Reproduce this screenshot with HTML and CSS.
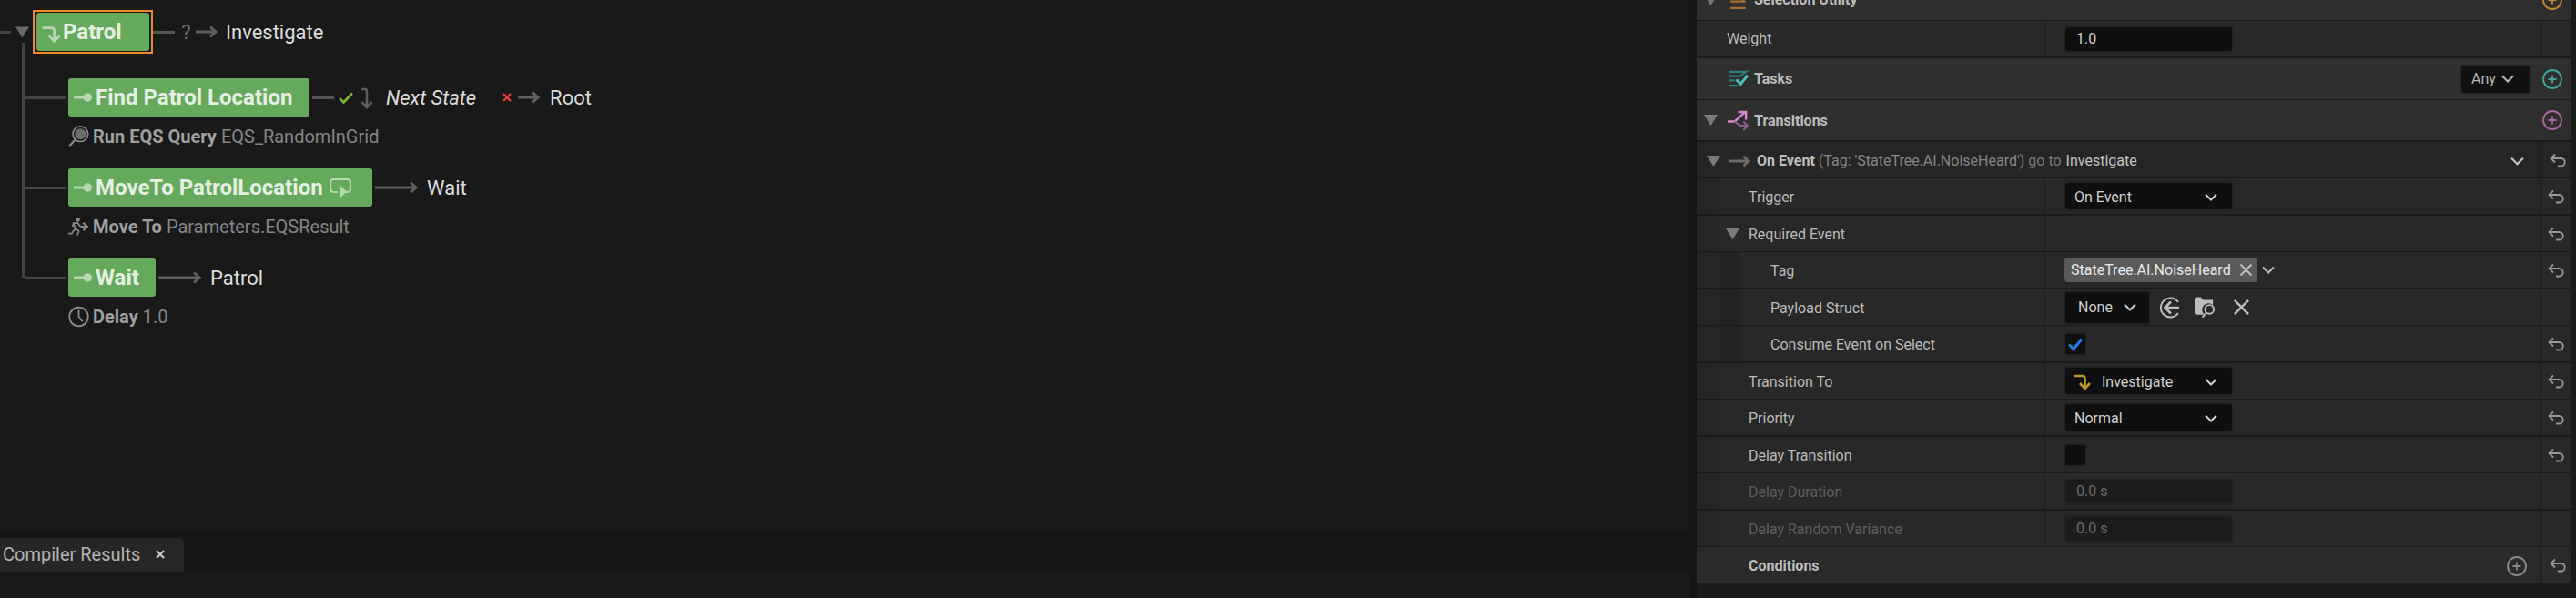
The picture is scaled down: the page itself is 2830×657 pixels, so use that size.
FILE: index.html
```html
<!DOCTYPE html>
<html lang="en">
<head>
<meta charset="utf-8">
<title>State Tree</title>
<link rel="stylesheet" href="styles.css">
</head>
<body>
<svg class="defs" width="0" height="0" aria-hidden="true">
  <symbol id="reset" viewBox="0 0 18 16"><path d="M6 1.500 1.500 6 6 10.500M1.500 6H12.500a4 4 0 0 1 0 8.500H9" fill="none" stroke="currentColor" stroke-width="1.800"/></symbol>
  <symbol id="chev" viewBox="0 0 14 9"><path d="M1 1.500 7 7.500 13 1.500" fill="none" stroke="currentColor" stroke-width="2"/></symbol>
  <symbol id="tri" viewBox="0 0 15 12"><path d="M0 0H15L7.500 12Z" fill="currentColor"/></symbol>
  <symbol id="plus" viewBox="0 0 22 22"><circle cx="11" cy="11" r="10" fill="none" stroke="currentColor" stroke-width="1.800"/><path d="M11 6.500V15.500M6.500 11H15.500" stroke="currentColor" stroke-width="1.800"/></symbol>
  <symbol id="arrow" viewBox="0 0 24 14"><path d="M0 7H22M16 1.500 22 7 16 12.500" fill="none" stroke="currentColor" stroke-width="3"/></symbol>
  <symbol id="longarrow" viewBox="0 0 47 14"><path d="M0 7H45M39 1.500 45 7 39 12.500" fill="none" stroke="currentColor" stroke-width="3"/></symbol>
  <symbol id="pin" viewBox="0 0 22 12"><path d="M0 6H14" stroke="currentColor" stroke-width="3"/><circle cx="16" cy="6" r="5" fill="currentColor"/></symbol>
  <symbol id="cross" viewBox="0 0 20 20"><path d="M2 2 18 18M18 2 2 18" fill="none" stroke="currentColor" stroke-width="2.600"/></symbol>
</svg>

<div class="app">
  <main class="left">
    <section class="graph">
      <div class="state root">
        <span class="dash"></span>
        <svg class="tri-root"><use href="#tri"/></svg>
        <div class="outline">
          <div class="node node-patrol">
            <svg class="ico-enter" viewBox="0 0 21 22"><path d="M0 3H11Q14.500 3 14.500 7V18M8 12.500 14.500 19 21 12.500" fill="none" stroke="currentColor" stroke-width="3"/></svg>
            <span class="title">Patrol</span>
          </div>
        </div>
        <span class="line"></span>
        <span class="qm">?</span>
        <svg class="arrow"><use href="#arrow"/></svg>
        <span class="target target-i">Investigate</span>
      </div>

      <div class="tree">
        <div class="rail"></div>
        <div class="kids">
          <div class="kid">
            <div class="state">
              <span class="conn"></span>
              <div class="node node-find">
                <svg class="pin"><use href="#pin"/></svg>
                <span class="title">Find Patrol Location</span>
              </div>
              <span class="line line-find"></span>
              <svg class="check" viewBox="0 0 16 13"><path d="M1 7 5.500 11.500 15 1.500" fill="none" stroke="#7ab53a" stroke-width="2.600"/></svg>
              <svg class="down" viewBox="0 0 14 24"><path d="M1 2H5Q7 2 7 5V22M1.500 16 7 22 12.500 16" fill="none" stroke="currentColor" stroke-width="2.600"/></svg>
              <span class="target target-next">Next State</span>
              <svg class="fail" viewBox="0 0 10 10"><path d="M1 1 9 9M9 1 1 9" stroke="#f03a3a" stroke-width="2.400"/></svg>
              <svg class="arrow"><use href="#arrow"/></svg>
              <span class="target target-a">Root</span>
            </div>
            <div class="sub">
              <svg class="sub-ico" viewBox="0 0 24 26"><circle cx="14" cy="10" r="9" fill="none" stroke="currentColor" stroke-width="1.800"/><circle cx="14" cy="10" r="6.500" fill="currentColor" opacity=".75"/><path d="M7.500 17 1 24" stroke="currentColor" stroke-width="2.400"/></svg>
              <b>Run EQS Query</b> <span>EQS_RandomInGrid</span>
            </div>
          </div>

          <div class="kid">
            <div class="state">
              <span class="conn"></span>
              <div class="node node-move">
                <svg class="pin"><use href="#pin"/></svg>
                <span class="title">MoveTo PatrolLocation</span>
                <svg class="ico-loop" viewBox="0 0 24 23"><path d="M9 15H5Q1 15 1 11V5Q1 1 5 1H19Q23 1 23 5V11Q23 15 19 15H16" fill="none" stroke="currentColor" stroke-width="2.200"/><path d="M11 7 19 14.500 11 22Z" fill="currentColor"/></svg>
              </div>
              <svg class="long"><use href="#longarrow"/></svg>
              <span class="target target-wait">Wait</span>
            </div>
            <div class="sub">
              <svg class="sub-ico" viewBox="0 0 24 22"><circle cx="11" cy="3" r="2.400" fill="currentColor"/><path d="M0 19H4L8 13 6 7H11L14 11M8 13 12 16 10.500 21M5 11 6 7" fill="none" stroke="currentColor" stroke-width="1.800"/><path d="M14 11H20M17 6.500 22 11 17 15.500" fill="none" stroke="currentColor" stroke-width="2.200"/></svg>
              <b>Move To</b> <span>Parameters.EQSResult</span>
            </div>
          </div>

          <div class="kid">
            <div class="state">
              <span class="conn"></span>
              <div class="node node-wait">
                <svg class="pin"><use href="#pin"/></svg>
                <span class="title">Wait</span>
              </div>
              <svg class="long"><use href="#longarrow"/></svg>
              <span class="target target-wait">Patrol</span>
            </div>
            <div class="sub">
              <svg class="sub-ico" viewBox="0 0 22 22"><circle cx="11" cy="11" r="9.800" fill="none" stroke="currentColor" stroke-width="1.800"/><path d="M11 4V11L15 16" fill="none" stroke="currentColor" stroke-width="1.800"/></svg>
              <b>Delay</b> <span>1.0</span>
            </div>
          </div>
        </div>
      </div>
    </section>
    <nav class="tabbar">
      <div class="tab">Compiler Results<svg class="tab-x" viewBox="0 0 10 10"><path d="M1 1 9 9M9 1 1 9" stroke="currentColor" stroke-width="2.200"/></svg></div>
    </nav>
    <div class="leftfoot"></div>
  </main>

  <div class="gutter"></div>

  <aside class="details">
    <div class="band band-clip">
      <span class="band-tri"><svg class="tri"><use href="#tri"/></svg></span>
      <svg class="band-ico" viewBox="0 0 22 22"><path d="M3 4H19M3 13H19M3 20H19" stroke="#a8702c" stroke-width="2"/><path d="M16 0V12" stroke="#c98630" stroke-width="2.500"/></svg>
      <span class="band-title">Selection Utility</span>
      <svg class="plus plus-orange"><use href="#plus"/></svg>
    </div>

    <div class="row thick">
      <div class="name l0"><span>Weight</span></div>
      <div class="val"><div class="field"><span>1.0</span></div></div>
      <div class="rst"></div>
    </div>

    <div class="band">
      <span class="band-tri"></span>
      <svg class="band-ico" viewBox="0 0 24 20"><path d="M1 2H21L14 7H1M1 12H8M1 18H12" fill="none" stroke="#2f7d78" stroke-width="2.400"/><path d="M10 11 15 16 23 6" fill="none" stroke="#4fc4bd" stroke-width="3"/></svg>
      <span class="band-title">Tasks</span>
      <div class="any"><span>Any</span><svg class="chev"><use href="#chev"/></svg></div>
      <svg class="plus plus-teal"><use href="#plus"/></svg>
    </div>

    <div class="band band-end">
      <span class="band-tri"><svg class="tri"><use href="#tri"/></svg></span>
      <svg class="band-ico" viewBox="0 0 24 24"><path d="M0 13H8L19 3M12 2H21V11" fill="none" stroke="#d58ad0" stroke-width="2.600"/><path d="M8 13 15 18H23M18 13 23 18 18 23" fill="none" stroke="#8a5c88" stroke-width="2.400"/></svg>
      <span class="band-title">Transitions</span>
      <svg class="plus plus-purple"><use href="#plus"/></svg>
    </div>

    <div class="row head">
      <div class="summary">
        <svg class="tri tri-event"><use href="#tri"/></svg>
        <svg class="arrow-event"><use href="#arrow"/></svg>
        <b>On Event</b><span class="dim">(Tag: 'StateTree.AI.NoiseHeard')</span><span class="dim2">go to</span><span class="lit">Investigate</span>
        <svg class="chev chev-event"><use href="#chev"/></svg>
      </div>
      <div class="rst rst-wide"><svg class="reset"><use href="#reset"/></svg></div>
    </div>

    <div class="row thick">
      <div class="name l1"><span>Trigger</span></div>
      <div class="val"><div class="field combo"><span>On Event</span><svg class="chev"><use href="#chev"/></svg></div></div>
      <div class="rst"><svg class="reset"><use href="#reset"/></svg></div>
    </div>
    <div class="row">
      <div class="name l1 has-tri"><svg class="tri tri-req"><use href="#tri"/></svg><span>Required Event</span></div>
      <div class="val"></div>
      <div class="rst"><svg class="reset"><use href="#reset"/></svg></div>
    </div>
    <div class="row thick">
      <div class="name l2"><span>Tag</span></div>
      <div class="val">
        <div class="chip"><span>StateTree.AI.NoiseHeard</span><svg class="chip-x"><use href="#cross"/></svg></div>
        <svg class="chev chev-tag"><use href="#chev"/></svg>
      </div>
      <div class="rst"><svg class="reset"><use href="#reset"/></svg></div>
    </div>
    <div class="row">
      <div class="name l2"><span>Payload Struct</span></div>
      <div class="val">
        <div class="field none"><span>None</span><svg class="chev"><use href="#chev"/></svg></div>
        <svg class="act-back" viewBox="0 0 23 24"><path d="M21 6A10.500 10.500 0 1 0 21 18" fill="none" stroke="currentColor" stroke-width="2"/><path d="M22 12H7M13 5.500 6.500 12 13 18.500" fill="none" stroke="currentColor" stroke-width="2.600"/></svg>
        <svg class="act-folder" viewBox="0 0 24 24"><path d="M0 2Q0 0 2 0H7L10 3H21V9A7 7 0 0 0 11 20H2Q0 20 0 18Z" fill="currentColor"/><circle cx="17" cy="14" r="5" fill="none" stroke="currentColor" stroke-width="2"/><path d="M13 18 9 23" stroke="currentColor" stroke-width="2"/></svg>
        <svg class="act-x"><use href="#cross"/></svg>
      </div>
      <div class="rst"></div>
    </div>
    <div class="row thick">
      <div class="name l2"><span>Consume Event on Select</span></div>
      <div class="val"><div class="box"><svg class="tick" viewBox="0 0 16 14"><path d="M1 7.500 6 12.500 15 1.500" fill="none" stroke="#1a7fe8" stroke-width="3"/></svg></div></div>
      <div class="rst"><svg class="reset"><use href="#reset"/></svg></div>
    </div>
    <div class="row">
      <div class="name l1"><span>Transition To</span></div>
      <div class="val"><div class="field combo"><svg class="goto" viewBox="0 0 20 17"><path d="M0 2H9Q11.500 2 11.500 5V8" fill="none" stroke="#b89c1e" stroke-width="2.600"/><path d="M11.500 7V14M6 10 11.500 16 17 10" fill="none" stroke="#b89c1e" stroke-width="2.600"/></svg><span class="goto-label">Investigate</span><svg class="chev"><use href="#chev"/></svg></div></div>
      <div class="rst"><svg class="reset"><use href="#reset"/></svg></div>
    </div>
    <div class="row thick">
      <div class="name l1"><span>Priority</span></div>
      <div class="val"><div class="field combo"><span>Normal</span><svg class="chev"><use href="#chev"/></svg></div></div>
      <div class="rst"><svg class="reset"><use href="#reset"/></svg></div>
    </div>
    <div class="row">
      <div class="name l1"><span>Delay Transition</span></div>
      <div class="val"><div class="box"></div></div>
      <div class="rst"><svg class="reset"><use href="#reset"/></svg></div>
    </div>
    <div class="row thick off">
      <div class="name l1"><span>Delay Duration</span></div>
      <div class="val"><div class="field"><span>0.0 s</span></div></div>
      <div class="rst"></div>
    </div>
    <div class="row off">
      <div class="name l1"><span>Delay Random Variance</span></div>
      <div class="val"><div class="field"><span>0.0 s</span></div></div>
      <div class="rst"></div>
    </div>
    <div class="row head last">
      <div class="summary cond">
        <b>Conditions</b>
        <svg class="plus plus-grey"><use href="#plus"/></svg>
      </div>
      <div class="rst rst-wide"><svg class="reset"><use href="#reset"/></svg></div>
    </div>
  </aside>
</div>
</body>
</html>
```

FILE: styles.css
```css
* { box-sizing: border-box; }
html, body { margin: 0; height: 100%; background: #1a1a1a; overflow: hidden; }
body { font-family: Roboto, "Liberation Sans", sans-serif; color: #c0c0c0; }
.defs { position: absolute; }
svg { display: block; flex: none; }

.app { display: flex; width: 2830px; height: 657px; }

/* ---------- left: state tree ---------- */
.left { width: 1855px; display: flex; flex-direction: column; }
.graph { height: 583px; padding-top: 11px; background: #191919; color: #5c5c5c; }
.tabbar { height: 45px; padding-top: 8px; background: #151515; }
.tab { width: 202px; height: 37px; padding: 0 0 2px 3px; display: flex; align-items: center; background: #262626; border-top-right-radius: 5px; font-size: 20px; color: #b4b4b4; }
.tab-x { width: 10px; height: 10px; margin-left: 17px; color: #c8c8c8; }
.leftfoot { flex: 1; background: #1a1a1a; }
.gutter { width: 9px; background: #151515; border-left: 1px solid #242424; }

.state { display: flex; align-items: center; height: 48px; }
.dash { width: 12px; height: 3px; background: #444; }
.tri-root { width: 15px; height: 13px; margin: 0 4px 0 5px; color: #6a6a6a; }
.outline { padding: 1px 2px; border: 2px solid #ef8a1f; height: 48px; }
.node { display: flex; align-items: center; height: 42px; background: #65aa5c; border-radius: 3px; color: #e6efe4; }
.title { font-size: 24px; font-weight: 700; line-height: 42px; white-space: nowrap; }
.node-patrol { width: 124px; padding-left: 6px; }
.ico-enter { width: 20px; height: 20px; margin-right: 3px; margin-top: 6px; color: #b8d8b2; }
.pin { width: 21px; height: 12px; margin: 0 3px 0 6px; color: #b8d8b2; }
.node-find { width: 265px; }
.node-move { width: 334px; }
.node-wait { width: 96px; }
.ico-loop { width: 24px; height: 23px; margin-left: 7px; margin-top: 3px; color: #b8d8b2; }

.line { width: 24px; height: 3px; background: #555; }
.line-find { margin-left: 3px; }
.qm { width: 11px; margin: 0 5px 0 7px; font-size: 22px; color: #6c6c6c; text-align: center; }
.arrow { width: 24px; height: 14px; color: #5f5f5f; }
.long { width: 47px; height: 14px; margin-left: 3px; color: #5f5f5f; }
.target { font-size: 22px; color: #dcdcdc; white-space: nowrap; }
.target-i { margin-left: 9px; }
.target-a { margin-left: 11px; }
.target-wait { margin-left: 10px; }
.target-next { margin-left: 14px; font-style: italic; }
.check { width: 16px; height: 13px; margin-left: 5px; }
.down { width: 14px; height: 24px; margin-left: 8px; margin-top: 2px; color: #5f5f5f; }
.fail { width: 10px; height: 10px; margin: 0 7px 0 29px; }

.tree { display: flex; margin: -12px 0 0 24px; align-items: flex-start; }
.rail { width: 3px; height: 258px; background: #444; }
.kids { padding-top: 39px; }
.kid { height: 99px; }
.kid .state { height: 42px; }
.conn { width: 45px; height: 3px; margin-right: 3px; background: #444; }
.sub { display: flex; align-items: center; gap: 5px; height: 44px; margin-left: 48px; font-size: 20px; color: #858585; white-space: nowrap; }
.sub b { color: #a0a0a0; font-weight: 700; }
.sub-ico { width: 23px; height: 24px; color: #8a8a8a; margin-right: -1px; }

/* ---------- right: details ---------- */
.details { width: 961px; display: flex; flex-direction: column; font-size: 16px; }
.band { display: flex; flex: none; align-items: center; height: 46px; padding-right: 10px; background: #2f2f2f; border-bottom: 1px solid #181818; }
.band-end { border-bottom-width: 2px; }
.band-clip { margin-top: -23px; }
.band-tri { width: 34px; padding-left: 8px; color: #7a7a7a; }
.tri { width: 15px; height: 12px; color: #7a7a7a; }
.band-ico { width: 23px; height: 23px; }
.band-title { margin-left: 6px; font-weight: 700; color: #bdbdbd; flex: 1; }
.plus { width: 22px; height: 22px; margin-left: 12px; }
.plus-orange { color: #c98a2c; }
.plus-teal { color: #3fa6a0; }
.plus-purple { color: #a968a6; }
.plus-grey { color: #8c8c8c; margin-left: auto; margin-right: 14px; }
.any { display: flex; align-items: center; justify-content: space-between; width: 78px; height: 32px; padding: 0 18px 0 11px; background: #111; border: 1px solid #262626; border-radius: 4px; color: #b8b8b8; }
.any .chev { width: 14px; height: 9px; }

.row { display: flex; flex: none; height: 40px; background: #282828; border-bottom: 1px solid #1a1a1a; }
.row.thick { height: 41px; border-bottom-width: 2px; }
.row.last { height: 39px; border-bottom: 0; }
.row.head { background: #252525; }
.row.head.last { background: #2a2a2a; }
.name { width: 383px; display: flex; align-items: center; padding-top: 2px; border-right: 1px solid #1c1c1c; color: #bcbcbc; white-space: nowrap; }
.l0 { padding: 0 0 0 33px; }
.l1 { padding-left: 33px; margin-left: 24px; width: 359px; box-shadow: -24px 0 0 #252525; }
.l2 { padding-left: 33px; margin-left: 48px; width: 335px; box-shadow: -24px 0 0 #232323, -48px 0 0 #252525; }
.has-tri { position: relative; }
.tri-req { position: absolute; left: 8px; top: 14px; }
.val { width: 543px; display: flex; align-items: center; padding-left: 20px; }
.rst { width: 35px; display: flex; align-items: center; justify-content: center; border-left: 1px solid #1c1c1c; color: #9a9a9a; }
.rst-wide { padding-left: 3px; border-left: 2px solid #1c1c1c; }
.reset { width: 18px; height: 16px; }
.summary { width: 926px; display: flex; align-items: center; padding-top: 2px; white-space: nowrap; }
.summary b { color: #bebebe; font-weight: 700; }
.tri-event { margin-left: 11px; }
.arrow-event { width: 23px; height: 14px; margin: 0 7px 0 10px; color: #6a6a6a; }
.dim { margin-left: 4px; color: #868686; }
.dim2 { margin-left: 4px; color: #7a7a7a; }
.lit { margin-left: 5px; color: #c4c4c4; }
.chev-event { width: 15px; height: 10px; margin-left: auto; margin-right: 17px; color: #c4c4c4; }
.cond { padding-left: 57px; }

.field { display: flex; align-items: center; width: 187px; height: 30px; padding-left: 12px; background: #0f0f0f; border: 2px solid #232323; border-radius: 5px; color: #d0d0d0; }
.combo { justify-content: space-between; height: 33px; padding: 1px 16px 0 10px; }
.combo .chev { width: 14px; height: 9px; }
.goto { width: 20px; height: 17px; }
.goto-label { margin-right: auto; margin-left: 10px; }
.off .name { color: #5e5e5e; }
.off .field { background: #1c1c1c; color: #6c6c6c; }
.chip { display: flex; align-items: center; width: 212px; height: 27px; margin-left: 1px; padding-left: 7px; background: #5a5a5a; border-radius: 4px; color: #eaeaea; }
.chip-x { width: 15px; height: 15px; margin-left: auto; margin-right: 5px; color: #c0c0c0; }
.chev-tag { width: 14px; height: 9px; margin-left: 5px; color: #bdbdbd; }
.none { width: 96px; height: 38px; padding: 0 14px; justify-content: space-between; }
.none .chev { width: 14px; height: 9px; }
.act-back, .act-folder { width: 23px; height: 24px; color: #bcbcbc; }
.act-back { margin-left: 9px; }
.act-folder { margin-left: 16px; }
.act-x { width: 19px; height: 19px; margin-left: 19px; color: #bcbcbc; }
.box { display: flex; align-items: center; justify-content: center; width: 26px; height: 26px; background: #0f0f0f; border: 2px solid #232323; border-radius: 4px; }
.tick { width: 16px; height: 14px; }
```
